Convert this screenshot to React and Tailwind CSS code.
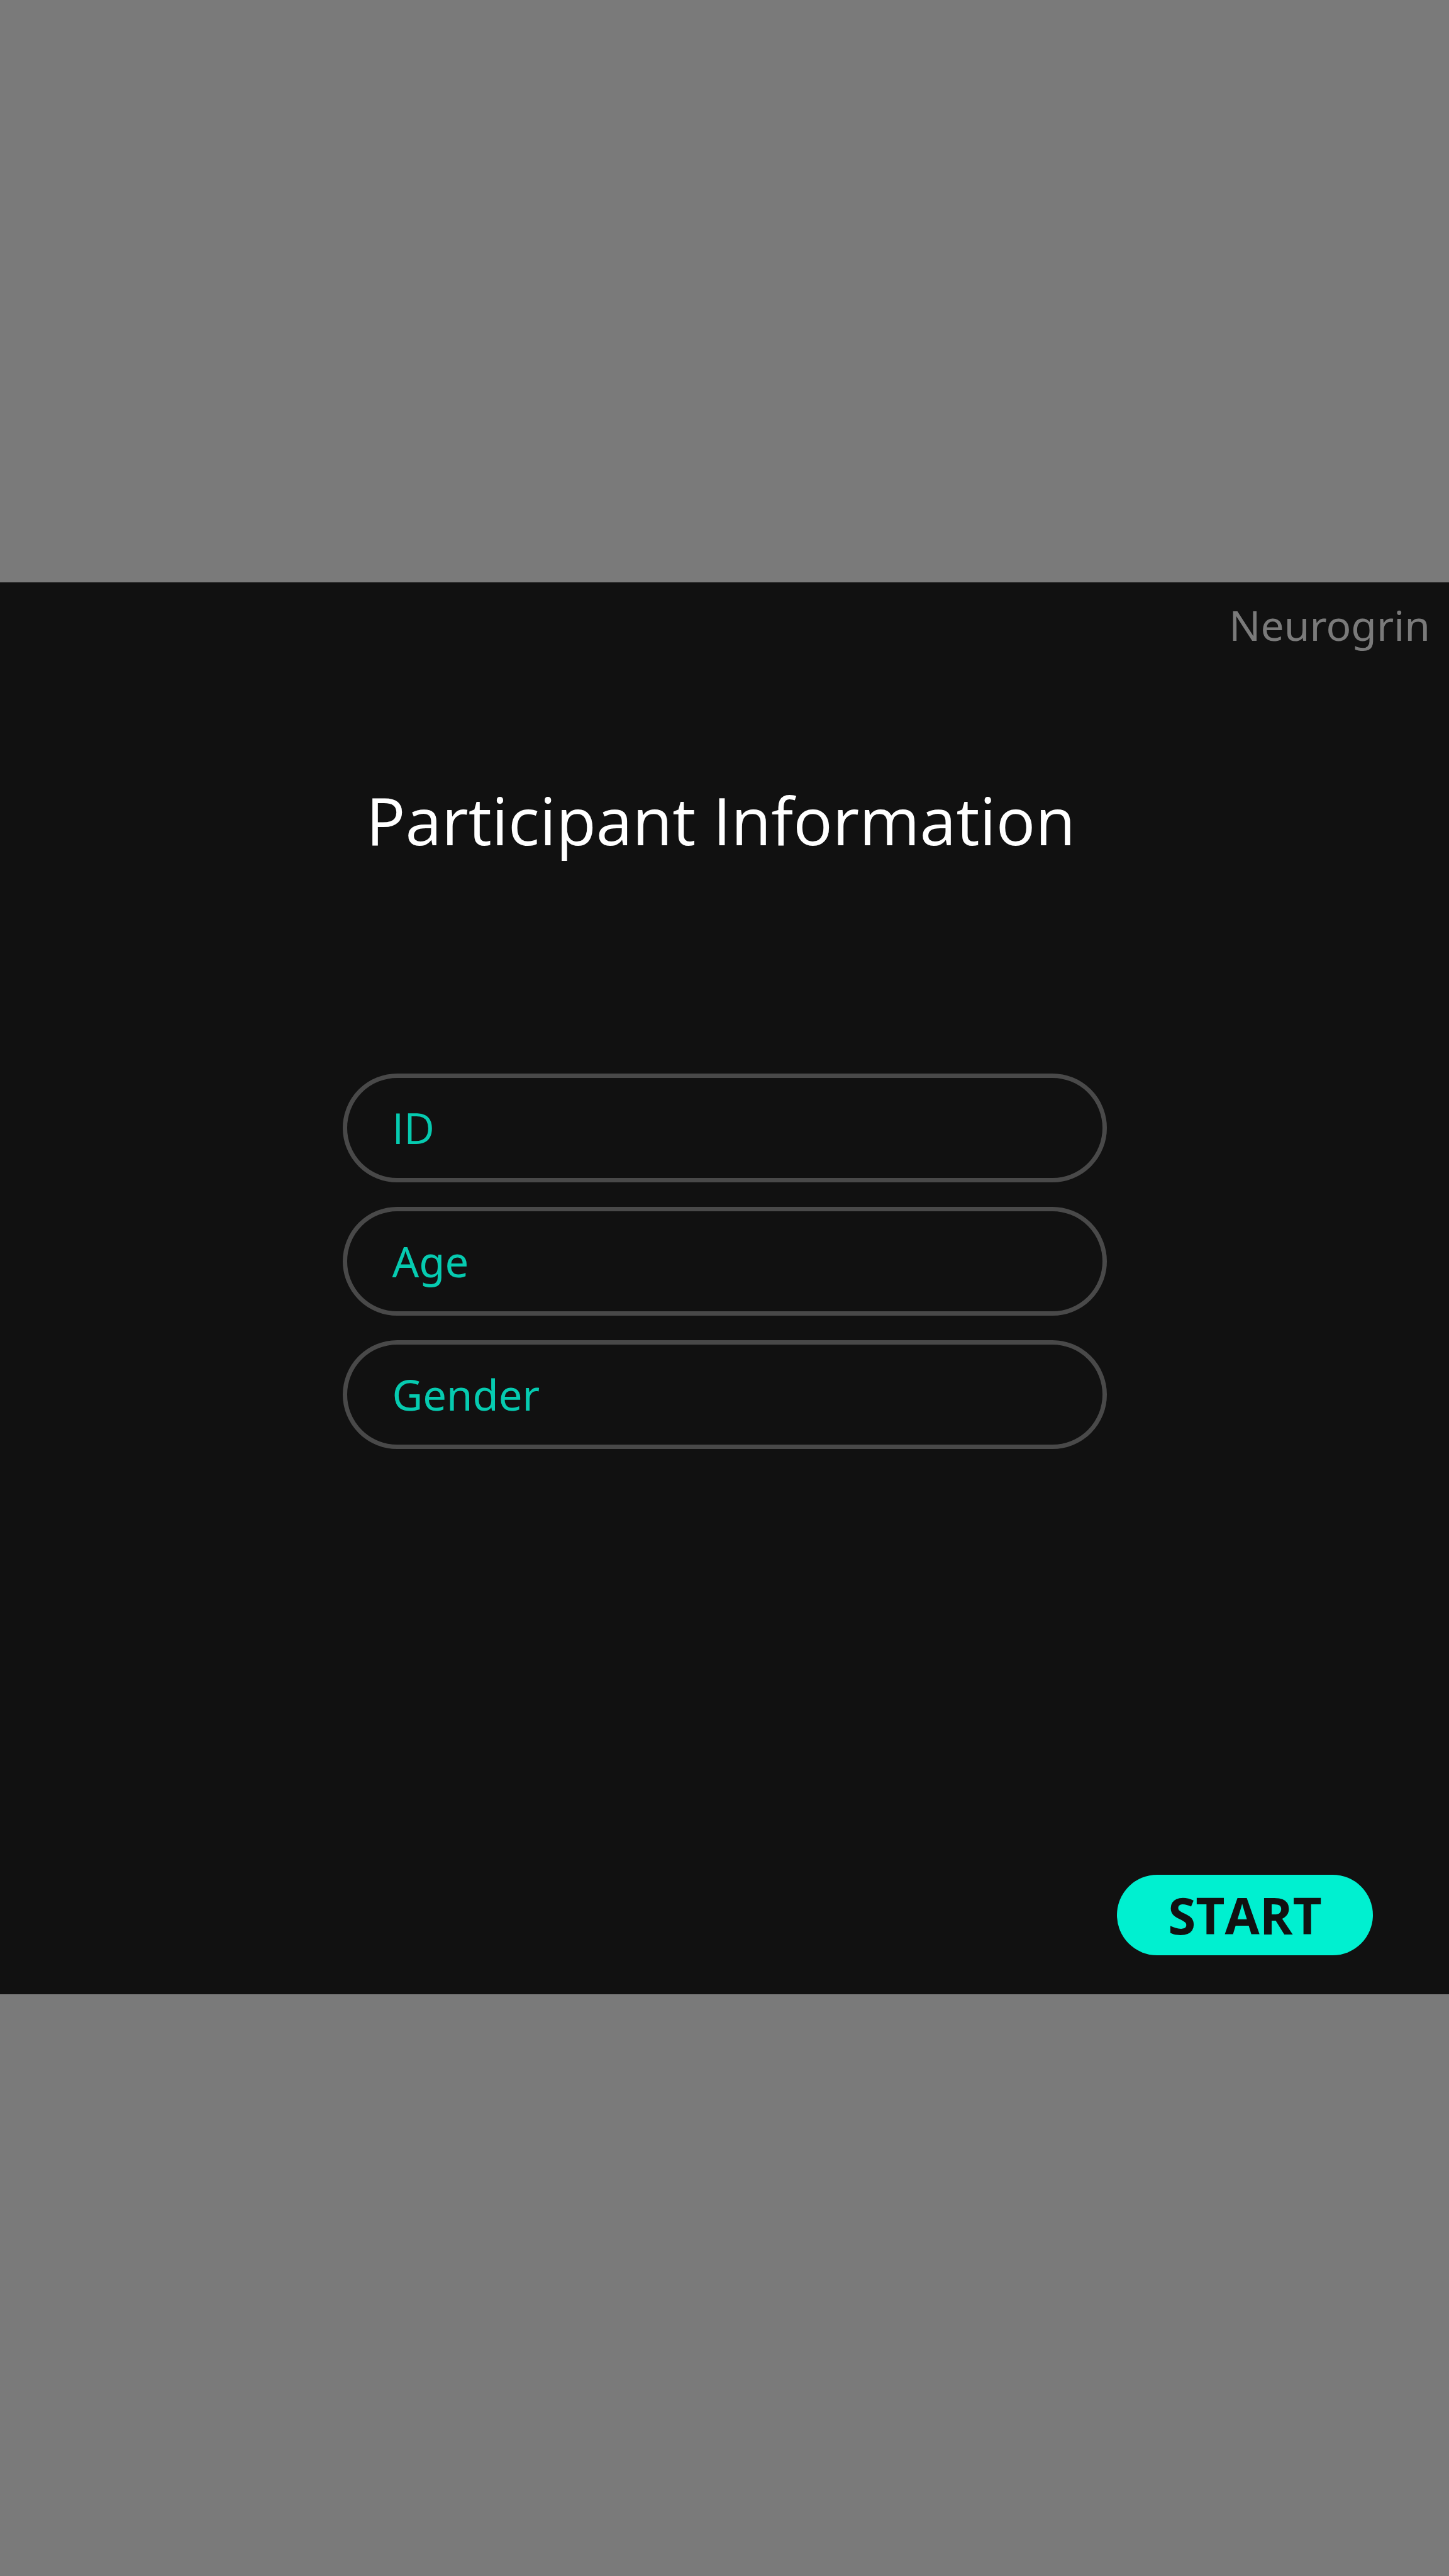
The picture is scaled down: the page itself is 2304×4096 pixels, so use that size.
const fields = [
  { name: "id", label: "ID", font: "font-['Open_Sans',sans-serif]" },
  { name: "age", label: "Age", font: "font-['Noto_Sans',sans-serif]" },
  { name: "gender", label: "Gender", font: "font-['Noto_Sans',sans-serif]" },
];

function Field({ name, label, font }) {
  return (
    <input
      type="text"
      name={name}
      aria-label={label}
      placeholder={label}
      className={`h-[173px] w-full rounded-full border-[7px] border-[#494949] bg-transparent px-[72px] text-[67px] text-[#06cbb0] outline-none placeholder:text-[#06cbb0] placeholder:opacity-100 ${font}`}
    />
  );
}

export default function App() {
  return (
    <div className="flex min-h-screen flex-col justify-center bg-[#7a7a7a] font-['Open_Sans','Noto_Sans',sans-serif]">
      <main className="flex flex-col bg-[#111111] pt-[27px] pb-[62px]">
        <header className="flex justify-end pr-[30px] font-['Noto_Sans',sans-serif] text-[66px] leading-[80px] text-[#7a7a7a]">
          Neurogrin
        </header>
        <h1 className="mt-[211px] pr-3 text-center text-[104px] leading-[120px] text-white">
          Participant Information
        </h1>
        <form className="mt-[343px] flex flex-col">
          <div className="mx-auto flex w-full max-w-[1215px] flex-col gap-[39px]">
            {fields.map((field) => (
              <Field key={field.name} {...field} />
            ))}
          </div>
          <button
            type="button"
            className="mt-[677px] mr-[121px] flex h-32 w-[407px] items-center justify-center self-end rounded-full bg-[#00f0d0] text-[80px] leading-[80px] font-bold text-[#111111]"
          >
            START
          </button>
        </form>
      </main>
    </div>
  );
}
